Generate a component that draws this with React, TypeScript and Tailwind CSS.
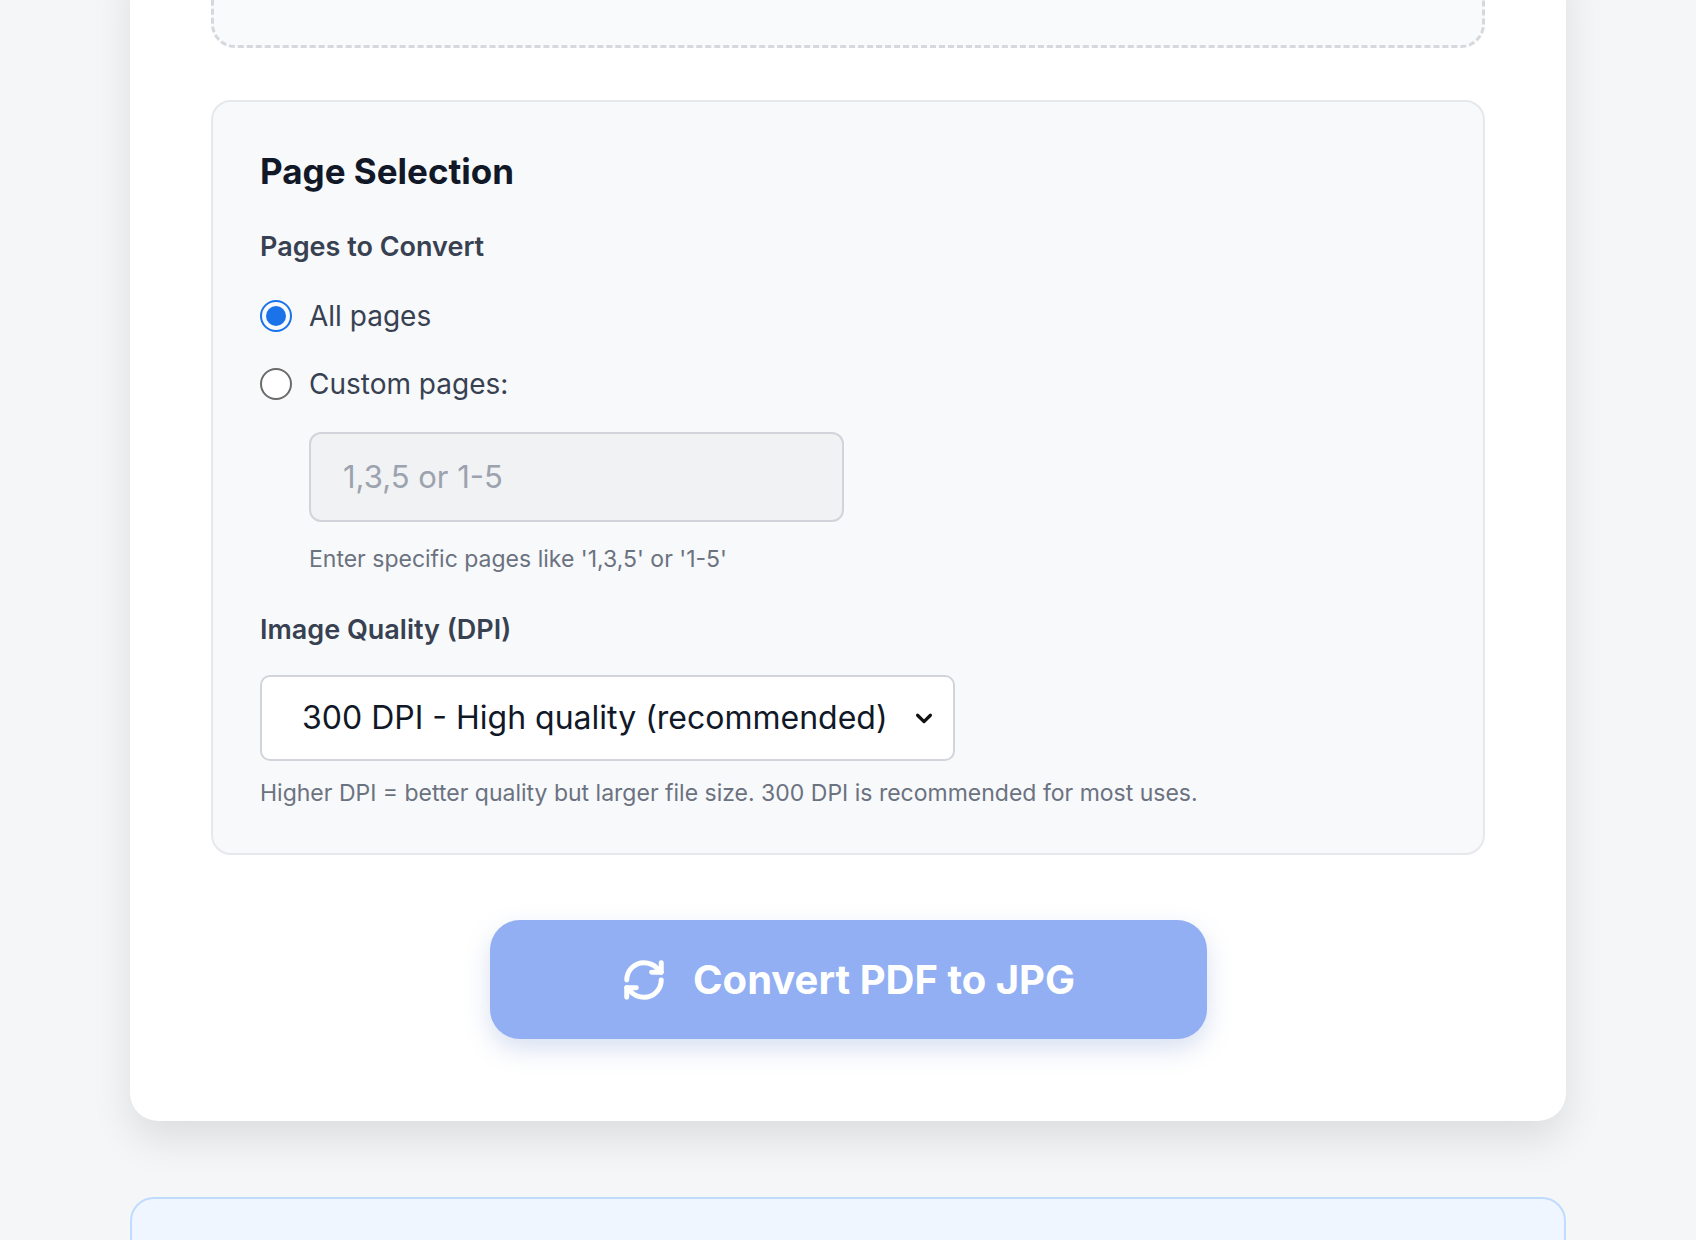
import { RefreshCw } from "lucide-react";

export default function App() {
  return (
    <div className="w-[1696px] h-[1240px] overflow-hidden bg-[#f5f6f8] relative" style={{ fontFamily: "Inter, 'Noto Sans', sans-serif" }}>
      <div className="mx-[130px] -mt-[40px] bg-white rounded-b-[28px] shadow-[0_18px_40px_rgba(0,0,0,0.10)] px-[81px] pb-[82px]">
        <div className="h-[88px] border-[3px] border-t-0 border-dashed border-[#d6d8dd] rounded-b-[24px] bg-[#f9fafb]" />
        <div className="mt-[52px] bg-[#f8f9fb] border-2 border-[#e6e8ec] rounded-[20px] pl-[47px] pt-[52px] pb-[48px]">
          <h2 className="text-[35px] leading-none font-bold text-[#111827]">Page Selection</h2>
          <div className="mt-[44px] text-[27px] font-semibold text-[#374151] leading-none">Pages to Convert</div>
          <div className="mt-[35px] flex items-center gap-[17px]">
            <div className="w-[32px] h-[32px] rounded-full border-2 border-[#1a73e8] flex items-center justify-center">
              <div className="w-[20px] h-[20px] rounded-full bg-[#1a73e8]" />
            </div>
            <span className="text-[28px] text-[#374151]">All pages</span>
          </div>
          <div className="mt-[26px] flex items-center gap-[17px]">
            <div className="w-[32px] h-[32px] rounded-full border-2 border-[#6b6b6b] bg-white" />
            <span className="text-[28px] text-[#374151]">Custom pages:</span>
          </div>
          <div className="ml-[49px] mt-[27px] w-[535px] h-[90px] rounded-[12px] border-2 border-[#d1d5db] bg-[#f1f2f4] flex items-center pl-[32px] text-[31px] text-[#9ca3af]">1,3,5 or 1-5</div>
          <div className="ml-[49px] mt-[26px] text-[23px] text-[#6b7280] leading-none">Enter specific pages like '1,3,5' or '1-5'</div>
          <div className="mt-[45px] text-[27px] font-semibold text-[#374151] leading-none">Image Quality (DPI)</div>
          <div className="mt-[32px] w-[695px] h-[86px] rounded-[10px] border-2 border-[#d1d5db] bg-white flex items-center justify-between pl-[40px] pr-[18px] text-[32px] text-[#111827]">
            <span>300 DPI - High quality (recommended)</span>
            <svg width="22" height="22" viewBox="0 0 24 24" fill="none" stroke="#111" strokeWidth="3.5" strokeLinecap="round" strokeLinejoin="round"><path d="M5 9l7 7 7-7" /></svg>
          </div>
          <div className="mt-[21px] text-[23px] text-[#6b7280] leading-none">Higher DPI = better quality but larger file size. 300 DPI is recommended for most uses.</div>
        </div>
        <div className="mt-[65px] flex justify-center">
          <div className="w-[717px] h-[119px] rounded-[30px] bg-[#91aff2] shadow-[0_10px_24px_rgba(100,130,200,0.25)] flex items-center justify-center gap-[26px] text-white">
            <RefreshCw size={46} strokeWidth={2.6} />
            <span className="text-[40px] font-bold">Convert PDF to JPG</span>
          </div>
        </div>
      </div>
      <div className="mx-[130px] mt-[76px] h-[120px] rounded-[24px] border-2 border-[#bfdbfe] bg-[#f0f6ff]" />
    </div>
  );
}
